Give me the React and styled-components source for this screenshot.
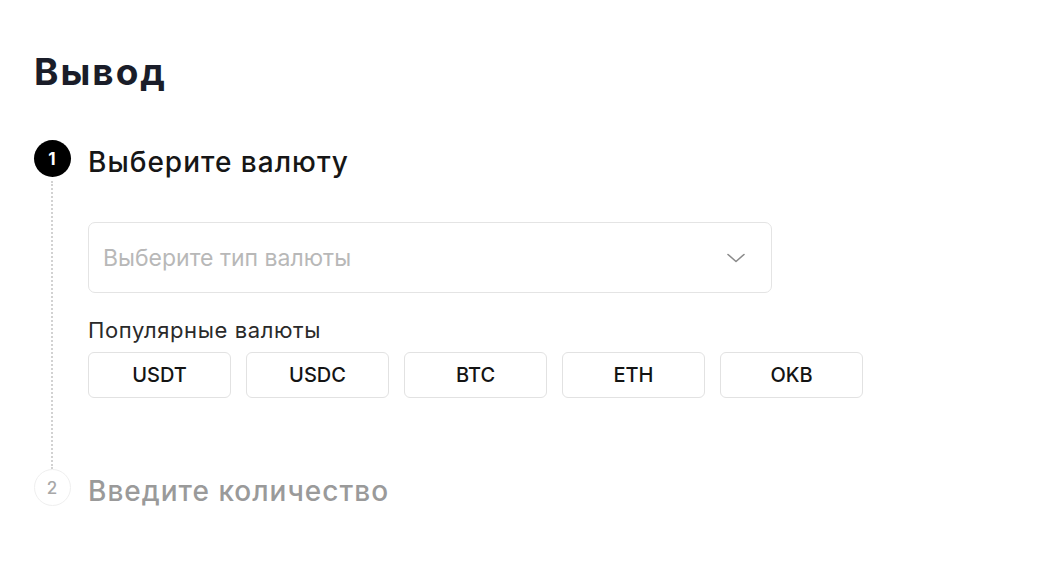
import React from "react";
import styled, { createGlobalStyle } from "styled-components";

const Global = createGlobalStyle`
  html, body { margin: 0; padding: 0; background: #fff; }
  body { font-family: Inter, "Noto Sans", "Liberation Sans", sans-serif; -webkit-font-smoothing: antialiased; }
`;

const Page = styled.div`
  padding: 49px 0 0 34px;
`;

const Title = styled.h1`
  margin: 0 0 45px;
  font-size: 37px;
  line-height: 46px;
  font-weight: 700;
  color: #1a1d29;
  letter-spacing: 2px;
`;

const Step = styled.div`
  display: flex;
  gap: 18px;
`;

const Rail = styled.div`
  width: 36px;
  display: flex;
  flex-direction: column;
  align-items: center;
`;

const Circle = styled.div`
  width: 37px;
  height: 37px;
  box-sizing: border-box;
  border-radius: 50%;
  display: flex;
  align-items: center;
  justify-content: center;
  font-size: 17px;
  flex-shrink: 0;
  background: ${p => (p.$active ? "#000" : "#fff")};
  color: ${p => (p.$active ? "#fff" : "#a8a8a8")};
  border: ${p => (p.$active ? "none" : "1.5px solid #efefef")};
  font-weight: ${p => (p.$active ? 700 : 500)};
`;

const Line = styled.div`
  flex: 1;
  border-left: 2px dotted #d2d2d2;
  margin: 4px 0 0;
`;

const Content = styled.div`
  display: flex;
  flex-direction: column;
  padding-bottom: ${p => p.$pb || 0}px;
`;

const StepTitle = styled.div`
  height: 40px;
  box-sizing: border-box;
  padding-top: 4px;
  font-size: 28px;
  line-height: 36px;
  letter-spacing: 1px;
  font-weight: 500;
  color: ${p => (p.$muted ? "#9a9a9a" : "#161616")};
`;

const Select = styled.div`
  margin-top: 42px;
  width: 684px;
  height: 71px;
  box-sizing: border-box;
  border: 1px solid #e4e4e4;
  border-radius: 7px;
  display: flex;
  align-items: center;
  justify-content: space-between;
  padding: 0 26px 0 14px;
`;

const Placeholder = styled.span`
  font-size: 23px;
  color: #b8b8b8;
`;

const Label = styled.div`
  margin-top: 23px;
  font-size: 22px;
  line-height: 28px;
  letter-spacing: 0.6px;
  color: #2a2a2a;
`;

const Chips = styled.div`
  margin-top: 8px;
  display: flex;
  gap: 15px;
`;

const Chip = styled.button`
  width: 143px;
  height: 46px;
  box-sizing: border-box;
  border: 1px solid #e2e2e2;
  border-radius: 6px;
  background: #fff;
  font-family: inherit;
  font-size: 20px;
  font-weight: 500;
  color: #141414;
  padding: 0;
`;

const Chevron = () => (
  <svg width="18" height="10" viewBox="0 0 18 10" fill="none">
    <path d="M1 1.5 L9 8.5 L17 1.5" stroke="#8a8a8a" strokeWidth="1.6" strokeLinecap="round" strokeLinejoin="round" />
  </svg>
);

export default function App() {
  const coins = ["USDT", "USDC", "BTC", "ETH", "OKB"];
  return (
    <>
      <Global />
      <Page>
        <Title>Вывод</Title>
        <Step>
          <Rail>
            <Circle $active>1</Circle>
            <Line />
          </Rail>
          <Content $pb={71}>
            <StepTitle>Выберите валюту</StepTitle>
            <Select>
              <Placeholder>Выберите тип валюты</Placeholder>
              <Chevron />
            </Select>
            <Label>Популярные валюты</Label>
            <Chips>
              {coins.map(c => (
                <Chip key={c}>{c}</Chip>
              ))}
            </Chips>
          </Content>
        </Step>
        <Step>
          <Rail>
            <Circle>2</Circle>
          </Rail>
          <Content>
            <StepTitle $muted>Введите количество</StepTitle>
          </Content>
        </Step>
      </Page>
    </>
  );
}
